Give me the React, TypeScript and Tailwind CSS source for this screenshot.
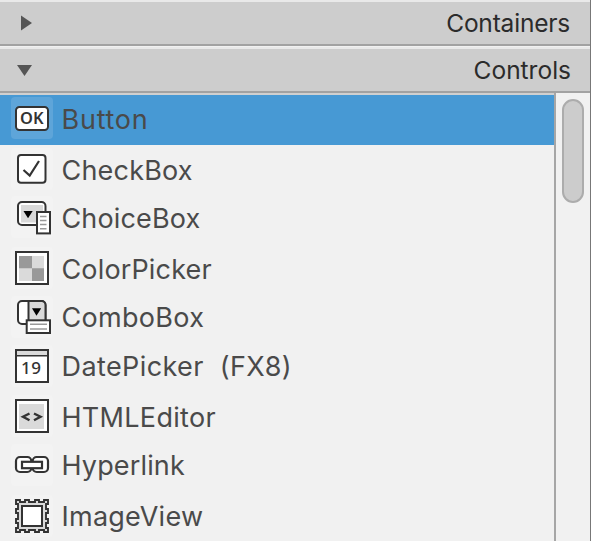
import type { ReactNode } from 'react';

const INK = '#333333';

function Icon({ children, className = 'bg-[#f3f3f3]' }: { children: ReactNode; className?: string }) {
  return (
    <svg className={`block h-[42px] w-[42px] shrink-0 rounded ${className}`} viewBox="0 0 42 42" fill="none">
      {children}
    </svg>
  );
}

const ButtonIcon = (
  <Icon className="bg-[#5ea5d9]">
    <rect x="5" y="10" width="32" height="23" rx="3.5" fill="#fff" stroke={INK} strokeWidth="2" />
    <text x="9" y="27.4" fontFamily="'Noto Sans', sans-serif" fontSize="16.5" fontWeight="600" fill={INK} textLength="23.5" lengthAdjust="spacingAndGlyphs">OK</text>
  </Icon>
);
const CheckIcon = (
  <Icon>
    <rect x="7" y="7" width="27.5" height="27.7" rx="3" fill="#fff" stroke={INK} strokeWidth="2" />
    <path d="M12.5 22 18.7 27.5 28 13" stroke={INK} strokeWidth="2.2" />
  </Icon>
);
const ChoiceIcon = (
  <Icon>
    <rect x="7" y="6" width="27.5" height="23" rx="4" fill="#fff" stroke={INK} strokeWidth="2" />
    <rect x="10" y="9" width="22" height="17.5" fill="#d9d9d9" />
    <path d="M12.5 15h9.2L17 22.3z" fill="#000" />
    <rect x="26" y="16" width="13" height="21.4" fill="#fff" stroke={INK} strokeWidth="2" />
    <path d="M29 20.5h6.5M29 24.5h6.5M29 28.5h6.5M29 32.8h6.5" stroke="#999" strokeWidth="1.6" />
  </Icon>
);
const ColorIcon = (
  <Icon>
    <rect x="5" y="5" width="32" height="32" fill="#fff" stroke={INK} strokeWidth="2" />
    <rect x="8" y="9" width="25" height="25" fill="#dadada" />
    <path d="M8 9h13v12.3H8zM21 21.3h12V34H21z" fill="#999" />
  </Icon>
);
const ComboIcon = (
  <Icon>
    <rect x="7" y="5" width="27.5" height="23" rx="4" fill="#fff" stroke={INK} strokeWidth="2" />
    <path d="M18 6h13a3 3 0 0 1 3 3v18H18z" fill="#d9d9d9" />
    <path d="M17.5 5v23M11 5h19.5a4 4 0 0 1 4 4v15" stroke={INK} strokeWidth="2" />
    <path d="M21 12.3h9.2L25.500 19.7z" fill="#000" />
    <rect x="15.7" y="24.3" width="23.3" height="12.7" fill="#fff" stroke={INK} strokeWidth="2" />
    <path d="M19 28.3h17M19 33h17" stroke="#999" strokeWidth="1.6" />
  </Icon>
);
const DateIcon = (
  <Icon>
    <rect x="5" y="5" width="32" height="32" fill="#fff" stroke={INK} strokeWidth="2" />
    <rect x="6" y="6" width="30" height="4" fill="#dadada" />
    <path d="M5 10.8h32" stroke={INK} strokeWidth="1.6" />
    <text x="10" y="28.7" fontFamily="'Noto Sans', sans-serif" fontSize="17" fontWeight="500" fill={INK} textLength="20" lengthAdjust="spacing">19</text>
  </Icon>
);
const HtmlIcon = (
  <Icon>
    <rect x="5" y="5" width="32" height="32" fill="#fff" stroke={INK} strokeWidth="2" />
    <rect x="8" y="9" width="25" height="25" fill="#dadada" />
    <path d="M18.5 18.5 12 21.800l6.500 3.400M23 18.500l6.500 3.300-6.500 3.400" stroke={INK} strokeWidth="2.4" />
  </Icon>
);
const LinkIcon = (
  <Icon>
    <rect x="5" y="13" width="15.3" height="15" rx="4" fill="#fff" stroke={INK} strokeWidth="2.2" />
    <rect x="21.7" y="13" width="15.3" height="15" rx="4" fill="#fff" stroke={INK} strokeWidth="2.2" />
    <rect x="11" y="17.8" width="20" height="6.400" fill="#fff" stroke={INK} strokeWidth="2.2" />
  </Icon>
);
const ImageIcon = (
  <Icon>
    <path d="M5 5h4v2h5V5h4v2h6V5h4v2h5V5h4v4h-2v5h2v4h-2v6h2v4h-2v5h2v4h-4v-2h-5v2h-4v-2h-6v2h-4v-2H9v2H5v-4h2v-5H5v-4h2v-6H5v-4h2V9H5z" fill="#dadada" stroke={INK} strokeWidth="1.9" />
    <rect x="11" y="11" width="20" height="20" fill="#fff" stroke={INK} strokeWidth="2" />
  </Icon>
);

const items = [
  { label: 'Button', icon: ButtonIcon, row: 'bg-[#4799d4] pt-[2px] pb-[6px]', text: 'pt-[3px] tracking-[0.75px]' },
  { label: 'CheckBox', icon: CheckIcon, row: 'mt-[3px]', text: 'pt-[3px] tracking-[0.2px]' },
  { label: 'ChoiceBox', icon: ChoiceIcon, row: 'mt-[6px]', text: 'pt-[3px] tracking-[0.15px]' },
  { label: 'ColorPicker', icon: ColorIcon, row: 'mt-[9px]', text: 'pt-[3px] tracking-[0.15px]' },
  { label: 'ComboBox', icon: ComboIcon, row: 'mt-[7px]', text: 'pt-[2px] tracking-[0.3px]' },
  { label: 'DatePicker  (FX8)', icon: DateIcon, row: 'mt-[7px]', text: 'pt-[2px] tracking-[0.4px]' },
  { label: 'HTMLEditor', icon: HtmlIcon, row: 'mt-[8px]', text: 'pt-[3px] tracking-[0.3px]' },
  { label: 'Hyperlink', icon: LinkIcon, row: 'mt-[7px]', text: 'pt-[2px] tracking-[0.15px]' },
  { label: 'ImageView', icon: ImageIcon, row: 'mt-[9px]', text: 'pt-[2px] tracking-[0.25px]' },
];

function Header({ title, open, className }: { title: string; open?: boolean; className: string }) {
  return (
    <div className={`flex shrink-0 items-center justify-between border-t-2 border-b-2 border-t-[#e9e9e9] border-b-[#a2a2a2] bg-[#cdcdcd] text-[24.5px] text-[#2b2b2b] ${className}`}>
      <svg className="ml-4 h-4 w-4" viewBox="0 0 16 16" fill="#555">
        {open ? <path d="M1 3h15L8.5 14z" /> : <path d="M5 .5 16 8 5 15.5z" />}
      </svg>
      <span className="leading-none">{title}</span>
    </div>
  );
}

export default function App() {
  return (
    <div className="flex h-[541px] w-[591px] flex-col overflow-hidden border-r border-[#777] bg-[#f1f1f1] font-['Inter',sans-serif]">
      <Header title="Containers" className="h-[46px] pr-[20px] tracking-[-0.2px]" />
      <Header title="Controls" open className="mt-px h-[46px] pr-[19px]" />
      <div className="flex min-h-0 flex-1">
        <div className="min-w-0 flex-1 border-t-2 border-[#d0d0d0]">
          {items.map((it) => (
            <div key={it.label} className={`flex h-[42px] box-content items-center gap-[8.5px] pl-[11px] ${it.row}`}>
              {it.icon}
              <span className={`whitespace-pre text-[27px] leading-[42px] text-[#4a4a4a] ${it.text}`}>{it.label}</span>
            </div>
          ))}
        </div>
        <div className="w-[36px] border-l-2 border-[#a6a6a6] pt-[6px] pl-[6px]">
          <div className="h-[104px] w-[22px] rounded-full border-2 border-[#acacac] bg-[#cccccc]" />
        </div>
      </div>
    </div>
  );
}
